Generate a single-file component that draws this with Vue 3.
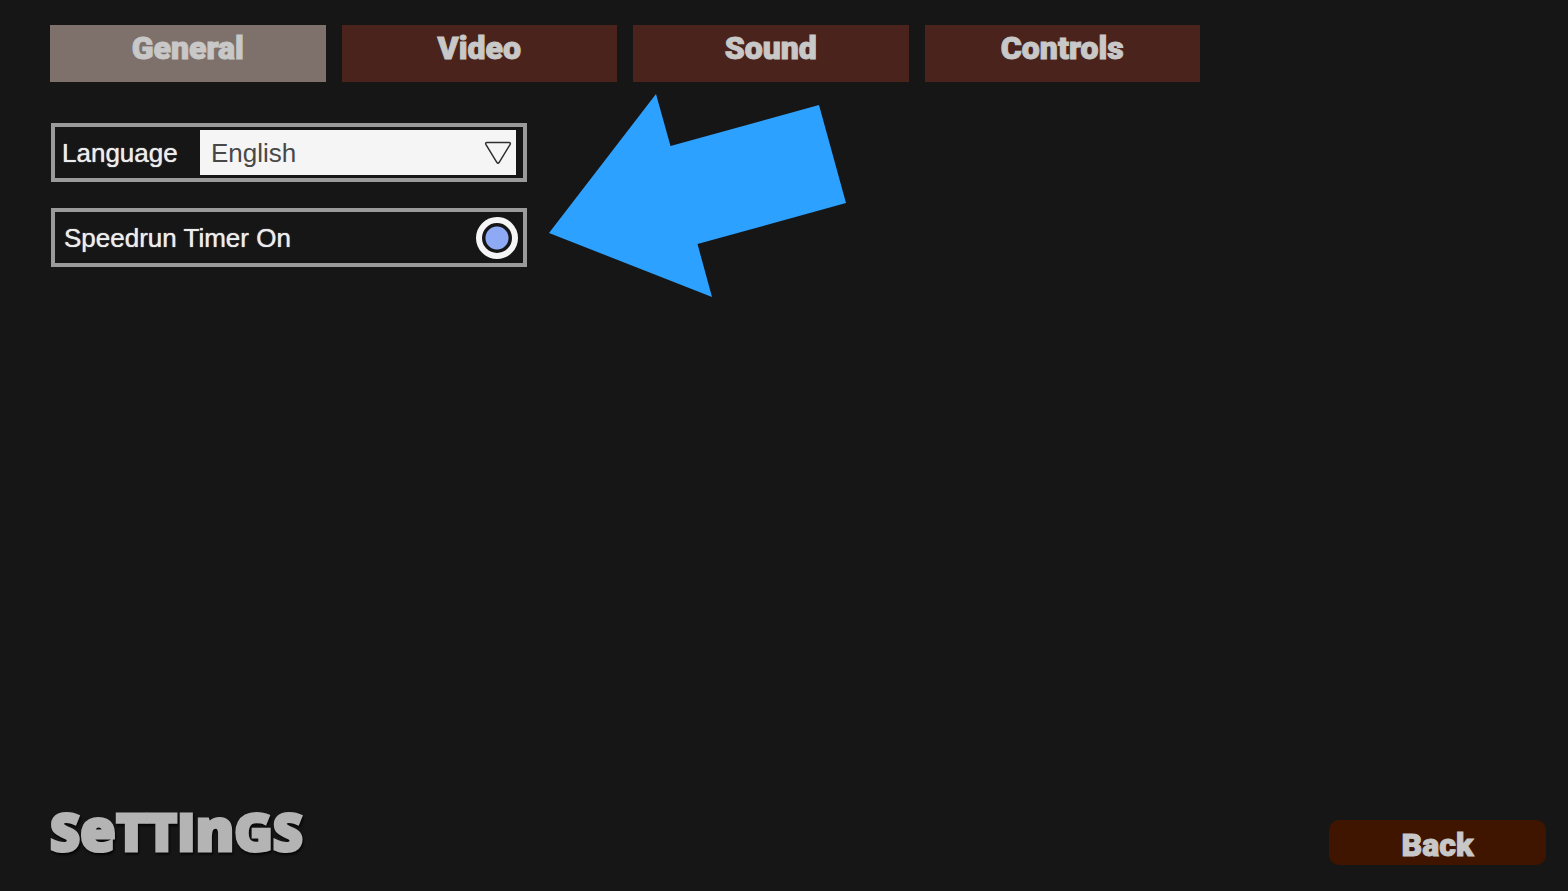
<script setup>
import { ref } from 'vue'

const tabs = ['General', 'Video', 'Sound', 'Controls']
const activeTab = ref('General')
const language = ref('English')
const speedrunTimer = ref(true)
</script>

<template>
  <main class="screen">
    <nav class="tabs" aria-label="Settings sections">
      <button
        v-for="tab in tabs"
        :key="tab"
        type="button"
        class="tab"
        :class="{ active: tab === activeTab }"
        @click="activeTab = tab"
      >{{ tab }}</button>
    </nav>

    <section class="options">
      <div class="option">
        <label class="language-label" for="language">Language</label>
        <div class="picker">
          <select id="language" v-model="language">
            <option>English</option>
          </select>
          <svg class="chevron" viewBox="0 0 28 24" aria-hidden="true">
            <path d="M3 1.5H25Q27 1.5 26 3.6L15.2 21.3Q14 23 12.8 21.3L2 3.6Q1 1.5 3 1.5Z" />
          </svg>
        </div>
      </div>

      <div class="option">
        <label class="timer-label" for="timer">Speedrun Timer On</label>
        <input id="timer" v-model="speedrunTimer" type="checkbox" class="toggle" />
      </div>

      <svg class="pointer" viewBox="0 0 298 203" aria-hidden="true">
        <path d="M0 139L107 0L121.500 52L270 11L297 109L148.500 150L163 203Z" />
      </svg>
    </section>

    <footer class="footer">
      <h1 class="title">S<span class="tall">e</span>TTI<span class="tall">n</span>GS</h1>
      <button type="button" class="back">Back</button>
    </footer>
  </main>
</template>

<style>
body {
  background: #161616;
}
</style>

<style scoped>
.screen {
  box-sizing: border-box;
  min-height: 100vh;
  display: flex;
  flex-direction: column;
  padding: 25px 22px 26px 50px;
  background: #161616;
  font-family: "Liberation Sans", Arial, sans-serif;
}

.tabs {
  display: grid;
  grid-template-columns: repeat(4, 1fr);
  gap: 16px;
  max-width: 1150px;
}

.tab,
.back {
  margin: 0;
  border: 0;
  color: #c8c8c8;
  font-family: Roboto, "Liberation Sans", sans-serif;
  font-size: 32px;
  font-weight: 900;
  line-height: 36px;
  -webkit-text-stroke: 1px #c8c8c8;
  cursor: pointer;
}

.tab {
  padding: 5px 8px 16px;
  background: #4a241c;
}

.tab.active {
  background: #7e716b;
}

.options {
  position: relative;
  display: flex;
  flex-direction: column;
  gap: 26px;
  width: 476px;
  margin: 41px 0 0 1px;
}

.option {
  box-sizing: border-box;
  display: flex;
  align-items: center;
  min-height: 59px;
  border: 4px solid #9a9a9a;
  color: #ececec;
  font-size: 26px;
  line-height: 32px;
}

.option label {
  text-shadow: 0 0 1px #ececec;
}

.language-label {
  width: 138px;
  padding-left: 7px;
}

.timer-label {
  flex: 1;
  padding-left: 9px;
}

.picker {
  flex: 1;
  position: relative;
  margin-right: 7px;
}

.picker select {
  display: block;
  width: 100%;
  height: 45px;
  padding: 0 36px 0 11px;
  border: 0;
  border-radius: 0;
  background: #f5f5f5;
  color: #484848;
  font: inherit;
  appearance: none;
}

.chevron {
  position: absolute;
  top: 11px;
  right: 4px;
  width: 28px;
  height: 24px;
  fill: none;
  stroke: #303030;
  stroke-width: 1.5;
  pointer-events: none;
}

.toggle {
  appearance: none;
  box-sizing: border-box;
  width: 42px;
  height: 42px;
  margin: 0 5px 0 0;
  border: 6px solid #f5f5f5;
  border-radius: 50%;
}

.toggle:checked {
  background: radial-gradient(circle, #8faaf5 11px, #161616 12px);
}

.pointer {
  position: absolute;
  top: -29px;
  left: 498px;
  width: 298px;
  height: 203px;
  fill: #2ca1ff;
  pointer-events: none;
}

.footer {
  display: flex;
  align-items: flex-end;
  justify-content: space-between;
  margin-top: auto;
}

.title {
  margin: 0;
  color: #b4b4b4;
  font-family: "Open Sans", sans-serif;
  font-size: 52px;
  font-weight: 800;
  line-height: 68px;
  -webkit-text-stroke: 3px #b4b4b4;
  filter: drop-shadow(1px 2px 1px #050505);
}

.tall {
  font-size: 58px;
  line-height: 68px;
}

.back {
  width: 217px;
  padding: 7px 8px 2px;
  border-radius: 10px;
  background: #401500;
}
</style>
